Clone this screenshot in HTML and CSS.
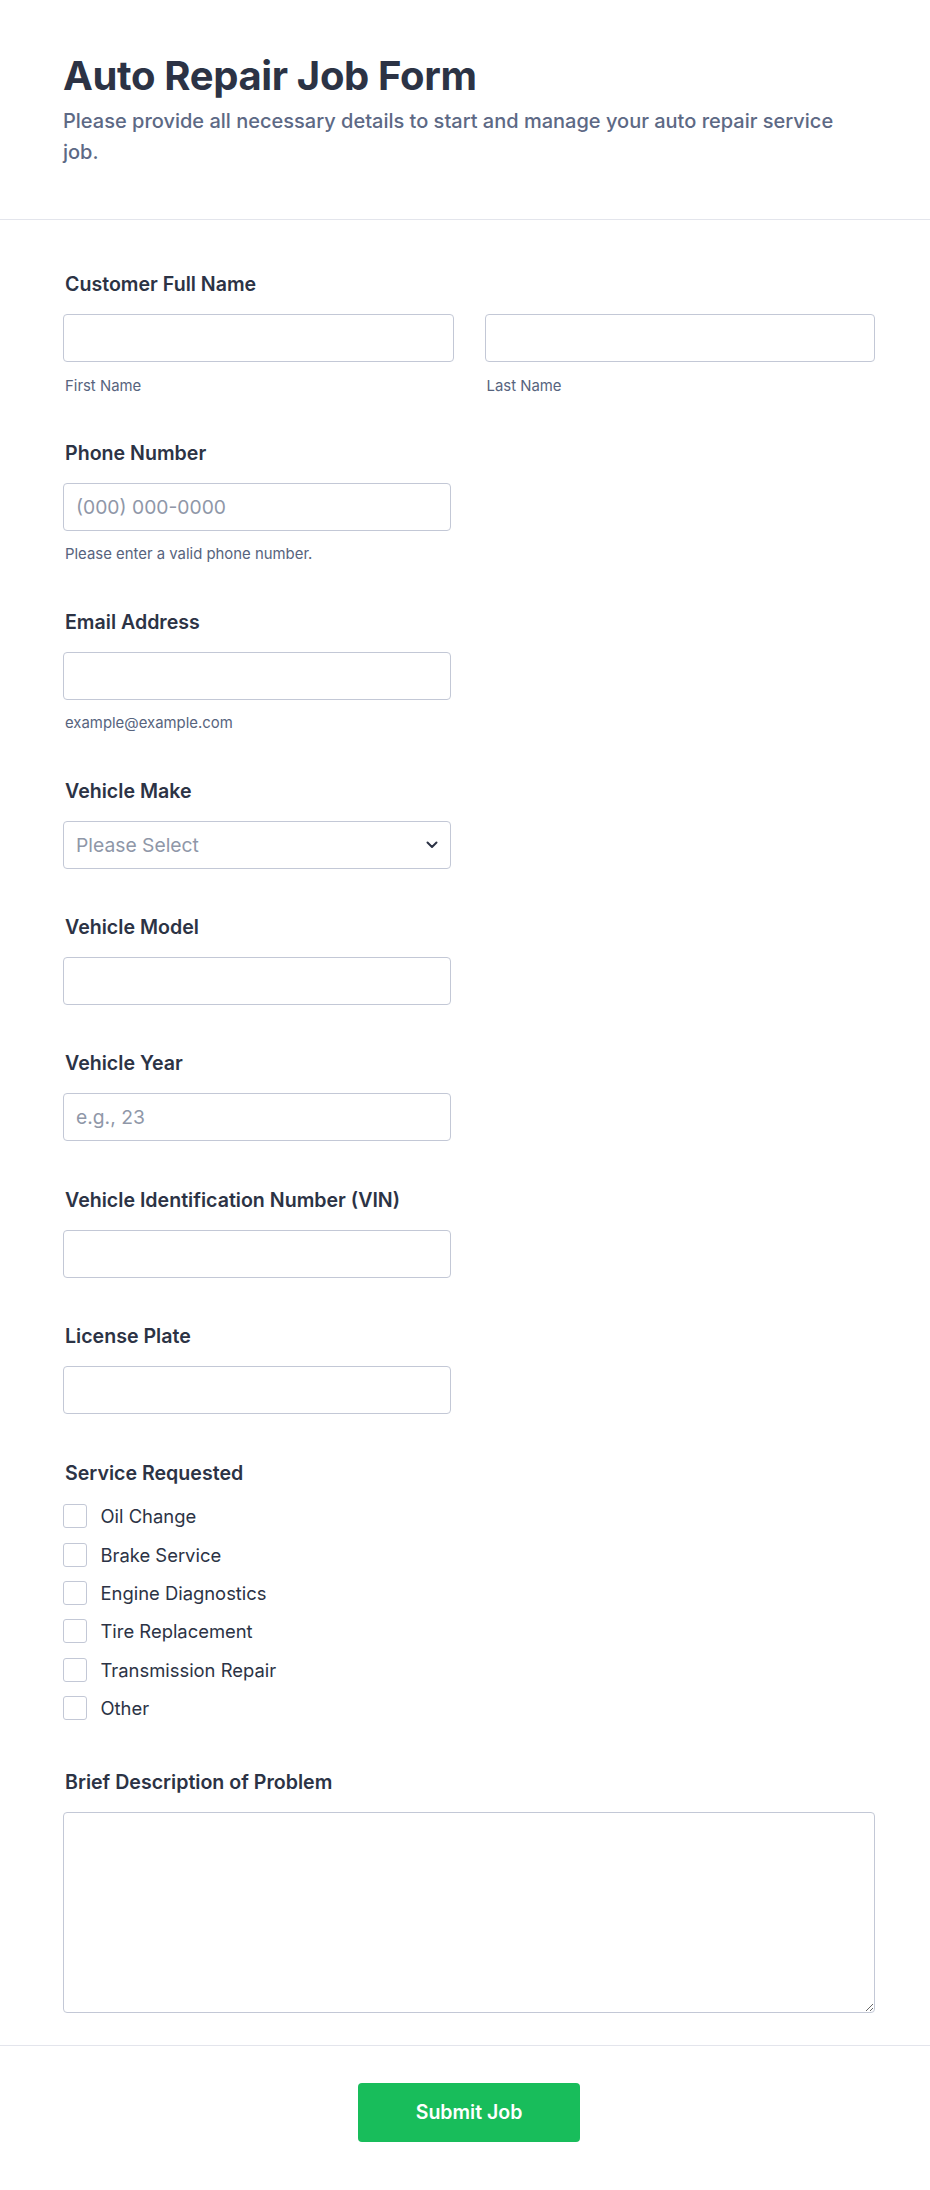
FILE: index.html
```html
<!DOCTYPE html>
<html lang="en">
<head>
<meta charset="utf-8">
<title>Auto Repair Job Form</title>
<link rel="stylesheet" href="styles.css">
</head>
<body>
<div class="page">
  <header class="form-header">
    <h1 class="form-title">Auto Repair Job Form</h1>
    <p class="form-subtitle">Please provide all necessary details to start and manage your auto repair service job.</p>
  </header>

  <form class="form-body">
    <div class="field">
      <label class="field-label">Customer Full Name</label>
      <div class="name-row">
        <div class="name-col">
          <input class="text-input" type="text">
          <span class="sublabel">First Name</span>
        </div>
        <div class="name-col">
          <input class="text-input" type="text">
          <span class="sublabel">Last Name</span>
        </div>
      </div>
    </div>

    <div class="field">
      <label class="field-label">Phone Number</label>
      <input class="text-input" type="tel" placeholder="(000) 000-0000">
      <span class="sublabel">Please enter a valid phone number.</span>
    </div>

    <div class="field">
      <label class="field-label">Email Address</label>
      <input class="text-input" type="email">
      <span class="sublabel">example@example.com</span>
    </div>

    <div class="field">
      <label class="field-label">Vehicle Make</label>
      <div class="select-wrap">
        <select class="select-input">
          <option>Please Select</option>
        </select>
        <svg class="select-chevron" width="12" height="8" viewBox="0 0 12 8" aria-hidden="true">
          <path d="M1.5 1.5 L6 6 L10.5 1.5" fill="none" stroke="#2c3345" stroke-width="2" stroke-linecap="round" stroke-linejoin="round"/>
        </svg>
      </div>
    </div>

    <div class="field">
      <label class="field-label">Vehicle Model</label>
      <input class="text-input" type="text">
    </div>

    <div class="field">
      <label class="field-label">Vehicle Year</label>
      <input class="text-input" type="text" placeholder="e.g., 23">
    </div>

    <div class="field">
      <label class="field-label">Vehicle Identification Number (VIN)</label>
      <input class="text-input" type="text">
    </div>

    <div class="field">
      <label class="field-label">License Plate</label>
      <input class="text-input" type="text">
    </div>

    <div class="field field-checks">
      <label class="field-label">Service Requested</label>
      <div class="check-list">
        <label class="check-item"><input class="check-box" type="checkbox"><span>Oil Change</span></label>
        <label class="check-item"><input class="check-box" type="checkbox"><span>Brake Service</span></label>
        <label class="check-item"><input class="check-box" type="checkbox"><span>Engine Diagnostics</span></label>
        <label class="check-item"><input class="check-box" type="checkbox"><span>Tire Replacement</span></label>
        <label class="check-item"><input class="check-box" type="checkbox"><span>Transmission Repair</span></label>
        <label class="check-item"><input class="check-box" type="checkbox"><span>Other</span></label>
      </div>
    </div>

    <div class="field">
      <label class="field-label">Brief Description of Problem</label>
      <textarea class="text-area"></textarea>
    </div>
  </form>

  <footer class="form-footer">
    <button class="submit-btn" type="button">Submit Job</button>
  </footer>
</div>
</body>
</html>
```

FILE: styles.css
```css
* {
  box-sizing: border-box;
}

html,
body {
  margin: 0;
  padding: 0;
  background: #ffffff;
}

body {
  font-family: Inter, "Noto Sans", "Liberation Sans", sans-serif;
  color: #2c3345;
}

.form-header {
  padding: 52px 55px 51px 63px;
  border-bottom: 1px solid #e3e5ec;
}

.form-title {
  margin: 0;
  font-size: 40px;
  line-height: 48px;
  font-weight: 700;
  letter-spacing: -0.35px;
  color: #2c3345;
}

.form-subtitle {
  margin: 6px 0 0;
  max-width: 790px;
  font-size: 20px;
  line-height: 31px;
  font-weight: 500;
  color: #5d6985;
}

.form-body {
  display: flex;
  flex-direction: column;
  gap: 46.4px;
  padding: 52px 55px 31.5px 63px;
}

.field {
  display: flex;
  flex-direction: column;
  align-items: flex-start;
}

.field-label {
  padding-left: 2px;
  font-size: 19.6px;
  line-height: 24px;
  font-weight: 600;
  color: #2c3345;
  margin-bottom: 18px;
}

.text-input,
.select-input {
  width: 387.5px;
  height: 48px;
  margin: 0;
  padding: 0 12px;
  border: 1px solid #c3c8d6;
  border-radius: 4px;
  background: #ffffff;
  font-family: inherit;
  font-size: 19.3px;
  color: #2c3345;
  outline: none;
}

.text-input::placeholder {
  color: #8f97a8;
}

.name-row {
  display: grid;
  grid-template-columns: 1fr 1fr;
  column-gap: 31px;
  width: 100%;
}

.name-col {
  display: flex;
  flex-direction: column;
}

.name-col .text-input {
  width: 100%;
}

.sublabel {
  margin-top: 14.5px;
  padding-left: 2px;
  font-size: 14.9px;
  line-height: 18px;
  color: #57647e;
}

.select-wrap {
  position: relative;
  width: 387.5px;
}

.select-input {
  width: 100%;
  appearance: none;
  -webkit-appearance: none;
  color: #8f97a8;
}

.select-chevron {
  position: absolute;
  right: 13px;
  top: 20px;
  pointer-events: none;
}

.field-checks .field-label {
  margin-bottom: 19.5px;
}

.check-list {
  display: flex;
  flex-direction: column;
  gap: 14.4px;
  padding-bottom: 4px;
}

.check-item {
  display: flex;
  align-items: center;
  gap: 13.5px;
  height: 24px;
  font-size: 18.4px;
  color: #2c3345;
}

.check-box {
  appearance: none;
  -webkit-appearance: none;
  width: 24px;
  height: 24px;
  margin: 0;
  border: 1px solid #c3c8d6;
  border-radius: 3px;
  background: #ffffff;
  flex: none;
}

.text-area {
  width: 100%;
  height: 201px;
  margin: 0;
  padding: 12px;
  border: 1px solid #c3c8d6;
  border-radius: 4px;
  background: #ffffff;
  font-family: inherit;
  font-size: 18px;
  color: #2c3345;
  outline: none;
}

.form-footer {
  display: flex;
  justify-content: center;
  padding: 37px 55px 50px 63px;
  border-top: 1px solid #e3e5ec;
}

.submit-btn {
  width: 222px;
  height: 59px;
  border: none;
  border-radius: 4px;
  background: #18bd5b;
  color: #ffffff;
  font-family: inherit;
  font-size: 19.5px;
  font-weight: 600;
  cursor: pointer;
}
```
